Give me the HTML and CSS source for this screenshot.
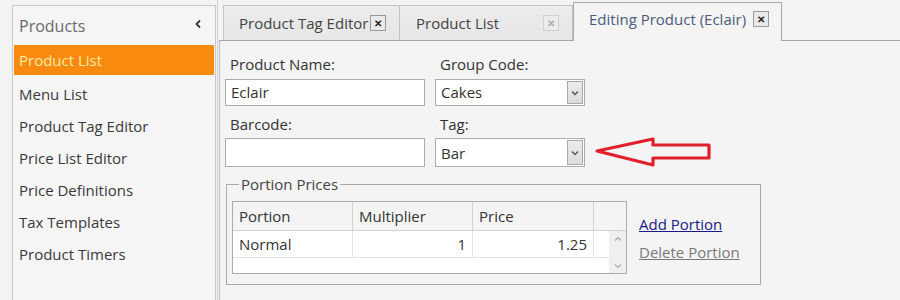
FILE: index.html
```html
<!DOCTYPE html>
<html>
<head>
<meta charset="utf-8">
<link rel="stylesheet" href="styles.css">
</head>
<body>
<div class="app">
  <aside class="sidebar">
    <div class="side-head">
      <span>Products</span>
      <svg class="collapse" width="8" height="10" viewBox="0 0 8 10"><path d="M6 1.5 L2.5 5 L6 8.5" fill="none" stroke="#333" stroke-width="1.8"/></svg>
    </div>
    <div class="side-item active">Product List</div>
    <div class="side-item">Menu List</div>
    <div class="side-item">Product Tag Editor</div>
    <div class="side-item">Price List Editor</div>
    <div class="side-item">Price Definitions</div>
    <div class="side-item">Tax Templates</div>
    <div class="side-item">Product Timers</div>
  </aside>
  <main class="main">
    <div class="tabs">
      <div class="tab t1"><span>Product Tag Editor</span><span class="close">&#x2715;</span></div>
      <div class="tab t2"><span>Product List</span><span class="close faded">&#x2715;</span></div>
      <div class="tab t3 selected"><span>Editing Product (Eclair)</span><span class="close">&#x2715;</span></div>
    </div>
    <div class="panel">
      <div class="form">
        <div class="field c1">
          <label>Product Name:</label>
          <div class="input">Eclair</div>
        </div>
        <div class="field c2">
          <label>Group Code:</label>
          <div class="input select">Cakes<span class="drop"><svg width="8" height="6" viewBox="0 0 8 6"><path d="M1 1.5 L4 4.5 L7 1.5" fill="none" stroke="#555" stroke-width="1.4"/></svg></span></div>
        </div>
        <div class="field c1 row2">
          <label>Barcode:</label>
          <div class="input tall"></div>
        </div>
        <div class="field c2 row2">
          <label>Tag:</label>
          <div class="input select tall">Bar<span class="drop"><svg width="8" height="6" viewBox="0 0 8 6"><path d="M1 1.5 L4 4.5 L7 1.5" fill="none" stroke="#555" stroke-width="1.4"/></svg></span></div>
        </div>
      </div>
      <fieldset class="group">
        <legend>Portion Prices</legend>
        <div class="group-body">
          <div class="grid">
            <div class="grid-head">
              <div class="cell w1">Portion</div>
              <div class="cell w2">Multiplier</div>
              <div class="cell w3">Price</div>
              <div class="cell w4"></div>
            </div>
            <div class="grid-body">
              <div class="rows">
                <div class="grid-row">
                  <div class="cell w1">Normal</div>
                  <div class="cell w2 num">1</div>
                  <div class="cell w3 num">1.25</div>
                </div>
              </div>
              <div class="vscroll">
                <svg width="8" height="6" viewBox="0 0 8 6"><path d="M1 4.5 L4 1.5 L7 4.5" fill="none" stroke="#aaa" stroke-width="1.2"/></svg>
                <svg width="8" height="6" viewBox="0 0 8 6"><path d="M1 1.5 L4 4.5 L7 1.5" fill="none" stroke="#aaa" stroke-width="1.2"/></svg>
              </div>
            </div>
          </div>
          <div class="links">
            <a class="link add">Add Portion</a>
            <a class="link del">Delete Portion</a>
          </div>
        </div>
      </fieldset>
      <div class="next-group">Product Tags</div>
    </div>
    <svg class="arrow" width="130" height="40" viewBox="590 132 130 40">
      <path d="M596 151 L652 139 L652 145 L708 145 L708 158 L652 158 L652 165 Z" fill="none" stroke="#e0202a" stroke-width="3.2" stroke-linejoin="round"/>
    </svg>
  </main>
</div>
</body>
</html>
```
FILE: styles.css
```css
* { box-sizing: border-box; }
html, body { margin: 0; padding: 0; }
body {
  width: 900px;
  height: 300px;
  overflow: hidden;
  background: #f3f3f3;
  font-family: "Open Sans", "Noto Sans", sans-serif;
  color: #333;
}
.app {
  display: flex;
  height: 300px;
  overflow: hidden;
  padding-left: 12px;
}
.sidebar {
  width: 204px;
  margin-top: 5px;
  height: 295px;
  background: #f5f5f5;
  border: 1px solid #c8c8c8;
  border-bottom: none;
  flex: none;
}
.side-head {
  height: 39px;
  display: flex;
  align-items: center;
  justify-content: space-between;
  padding: 0 13px 0 6px;
  font-size: 16px;
  color: #6a6a6a;
}
.collapse { margin-top: -3px; }
.side-item {
  height: 32px;
  line-height: 32px;
  padding-left: 6px;
  font-size: 15px;
  color: #3a3a3a;
  white-space: nowrap;
}
.side-item.active {
  background: #f78a0f;
  color: #ffe9a6;
  height: 30px;
  line-height: 30px;
  margin: 0 1px 3px 1px;
  padding-left: 5px;
}
.main {
  flex: 1;
  position: relative;
  margin-left: 1px;
  border-left: 1px solid #cfcfcf;
  height: 300px;
  display: flex;
  flex-direction: column;
}
.tabs {
  height: 41px;
  display: flex;
  align-items: flex-end;
  padding-left: 4px;
  border-bottom: 1px solid #a9a9a9;
  margin-left: 1px;
  flex: none;
}
.tab {
  height: 35px;
  display: flex;
  align-items: center;
  justify-content: space-between;
  font-size: 15px;
  color: #444;
  background: linear-gradient(#ececec, #e6e6e6);
  border: 1px solid #c4c4c4;
  border-bottom: none;
  white-space: nowrap;
  flex: none;
}
.t1 { width: 177px; padding: 0 13px 0 15px; }
.t2 { width: 173px; padding: 0 13px 0 16px; border-left: none; }
.t3 { width: 209px; padding: 0 12px 0 15px; }
.tab.selected {
  height: 39px;
  margin-bottom: -1px;
  background: #f4f4f4;
  border: 1px solid #a9a9a9;
  border-bottom: none;
  color: #4a5c7c;
  padding-bottom: 6px;
}
.close {
  width: 16px;
  height: 16px;
  border: 1px solid #9a9a9a;
  background: #e9e9e9;
  font-size: 10px;
  font-weight: bold;
  color: #222;
  display: flex;
  align-items: center;
  justify-content: center;
  line-height: 1;
}
.close.faded { border-color: #d0d0d0; color: #aaa; background: #ececec; }
.panel {
  flex: 1;
  margin-left: 1px;
  border-left: 1px solid #bdbdbd;
  background: #f4f4f4;
  padding: 13px 0 0 5px;
}
.form {
  display: grid;
  grid-template-columns: 200px 150px;
  column-gap: 10px;
}
.field label {
  display: block;
  height: 20px;
  line-height: 20px;
  padding-left: 5px;
  font-size: 15px;
  color: #333;
  margin-bottom: 5px;
}
.field.row2 { margin-top: 8px; }
.field.row2 label { margin-bottom: 4px; }
.input {
  height: 27px;
  background: #fff;
  border: 1px solid #ababab;
  font-size: 15px;
  line-height: 25px;
  padding-left: 5px;
  color: #333;
  position: relative;
}
.input.tall { height: 29px; line-height: 29px; }
.select .drop {
  position: absolute;
  right: 1px;
  top: 1px;
  bottom: 1px;
  width: 16px;
  background: linear-gradient(#ebebeb, #dcdcdc);
  border: 1px solid #a8a8a8;
  display: flex;
  align-items: center;
  justify-content: center;
}
.group {
  margin: 9px 0 0 1px;
  width: 535px;
  height: 109px;
  border: 1px solid #aaa;
  padding: 0 5px;
}
.group legend {
  font-size: 15px;
  color: #444;
  padding: 0 2px;
  margin-left: 7px;
  line-height: 16px;
}
.group-body {
  display: flex;
  margin-top: 9px;
}
.grid {
  width: 395px;
  border: 1px solid #acacac;
  background: #fff;
}
.grid-head {
  display: flex;
  height: 29px;
  background: #f4f4f4;
  border-bottom: 1px solid #d2d2d2;
}
.cell {
  font-size: 15px;
  color: #333;
  padding: 0 6px;
  display: flex;
  align-items: center;
}
.grid-head .cell { border-right: 1px solid #d2d2d2; }
.grid-head .w4 { border-right: none; }
.w1 { width: 120px; }
.w2 { width: 120px; }
.w3 { width: 121px; }
.w4 { flex: 1; }
.num { justify-content: flex-end; }
.grid-body {
  display: flex;
  height: 42px;
}
.rows { flex: 1; }
.grid-row {
  display: flex;
  height: 27px;
  border-bottom: 1px solid #e4e4e4;
}
.grid-row .cell { border-right: 1px solid #e4e4e4; }
.vscroll {
  width: 17px;
  background: #efefef;
  display: flex;
  flex-direction: column;
  justify-content: space-between;
  align-items: center;
  padding: 5px 0 4px;
}
.links {
  display: flex;
  flex-direction: column;
  padding: 12px 0 0 12px;
  gap: 6px;
}
.link {
  font-size: 15px;
  text-decoration: underline;
  line-height: 22px;
}
.link.add { color: #1a1a8a; }
.link.del { color: #7a7a7a; }
.next-group {
  margin: 10px 0 0 15px;
  font-size: 15px;
  color: #333;
}
.arrow {
  position: absolute;
  left: 373px;
  top: 132px;
}
```
